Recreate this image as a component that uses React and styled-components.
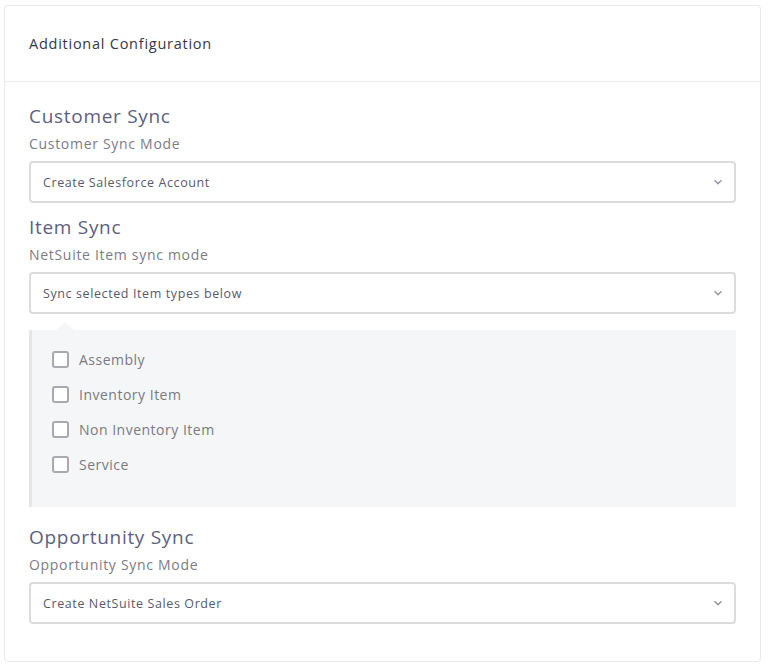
import { createGlobalStyle, styled } from "styled-components";

const GlobalStyle = createGlobalStyle`
  body {
    margin: 0;
    background: #ffffff;
    font-family: "Open Sans", "Liberation Sans", sans-serif;
  }
`;

const Page = styled.div`
  padding: 5px 7px 0 4px;
`;

const Card = styled.div`
  border: 1px solid #e9e9ee;
  border-radius: 4px;
  background: #ffffff;
`;

const CardHeader = styled.div`
  height: 75px;
  display: flex;
  align-items: center;
  padding: 0 24px;
  border-bottom: 1px solid #ececf0;
`;

const CardTitle = styled.h2`
  margin: 0;
  font-size: 14.5px;
  font-weight: 500;
  letter-spacing: 0.75px;
  color: #36374a;
`;

const CardBody = styled.div`
  padding: 22px 24px 37px 24px;
  display: flex;
  flex-direction: column;
`;

const SectionTitle = styled.h3`
  margin: ${(p) => p.$top || 0}px 0 6px;
  font-size: 19px;
  line-height: 24px;
  font-weight: 400;
  letter-spacing: 0.7px;
  color: #5d607f;
`;

const FieldLabel = styled.div`
  font-size: 14px;
  line-height: 20px;
  letter-spacing: 0.7px;
  color: #7c7c86;
  margin-bottom: 7px;
`;

const SelectBox = styled.div`
  height: 38px;
  border: 2px solid #dcdcdf;
  border-radius: 4px;
  display: flex;
  align-items: center;
  justify-content: space-between;
  padding: 0 11px 0 12px;
  font-size: 12.5px;
  font-weight: 500;
  letter-spacing: 0.6px;
  color: #575a6c;
`;

const Panel = styled.div`
  position: relative;
  margin-top: 16px;
  background: #f5f6f8;
  border-left: 3px solid #e6e6e9;
  padding: 19px 20px 33px;
  display: flex;
  flex-direction: column;
  gap: 15px;

  &::before {
    content: "";
    position: absolute;
    top: -8px;
    left: 24px;
    border-left: 9px solid transparent;
    border-right: 9px solid transparent;
    border-bottom: 8px solid #f5f6f8;
  }
`;

const CheckRow = styled.label`
  display: flex;
  align-items: center;
  gap: 10px;
  height: 20px;
  font-size: 14px;
  letter-spacing: 0.5px;
  color: #7a7a82;
`;

const Box = styled.span`
  width: 13px;
  height: 13px;
  border: 2px solid #a9a9ae;
  border-radius: 3px;
  background: #ffffff;
`;

function Chevron() {
  return (
    <svg width="10" height="6" viewBox="0 0 10 6" fill="none">
      <path d="M1.5 1.2L5 4.6L8.5 1.2" stroke="#9a9aa2" strokeWidth="1.5" />
    </svg>
  );
}

function Select({ value }) {
  return (
    <SelectBox>
      <span>{value}</span>
      <Chevron />
    </SelectBox>
  );
}

const itemTypes = ["Assembly", "Inventory Item", "Non Inventory Item", "Service"];

export default function App() {
  return (
    <Page>
      <GlobalStyle />
      <Card>
        <CardHeader>
          <CardTitle>Additional Configuration</CardTitle>
        </CardHeader>
        <CardBody>
          <SectionTitle>Customer Sync</SectionTitle>
          <FieldLabel>Customer Sync Mode</FieldLabel>
          <Select value="Create Salesforce Account" />

          <SectionTitle $top={12}>Item Sync</SectionTitle>
          <FieldLabel>NetSuite Item sync mode</FieldLabel>
          <Select value="Sync selected Item types below" />
          <Panel>
            {itemTypes.map((t) => (
              <CheckRow key={t}>
                <Box />
                {t}
              </CheckRow>
            ))}
          </Panel>

          <SectionTitle $top={18}>Opportunity Sync</SectionTitle>
          <FieldLabel>Opportunity Sync Mode</FieldLabel>
          <Select value="Create NetSuite Sales Order" />
        </CardBody>
      </Card>
    </Page>
  );
}
